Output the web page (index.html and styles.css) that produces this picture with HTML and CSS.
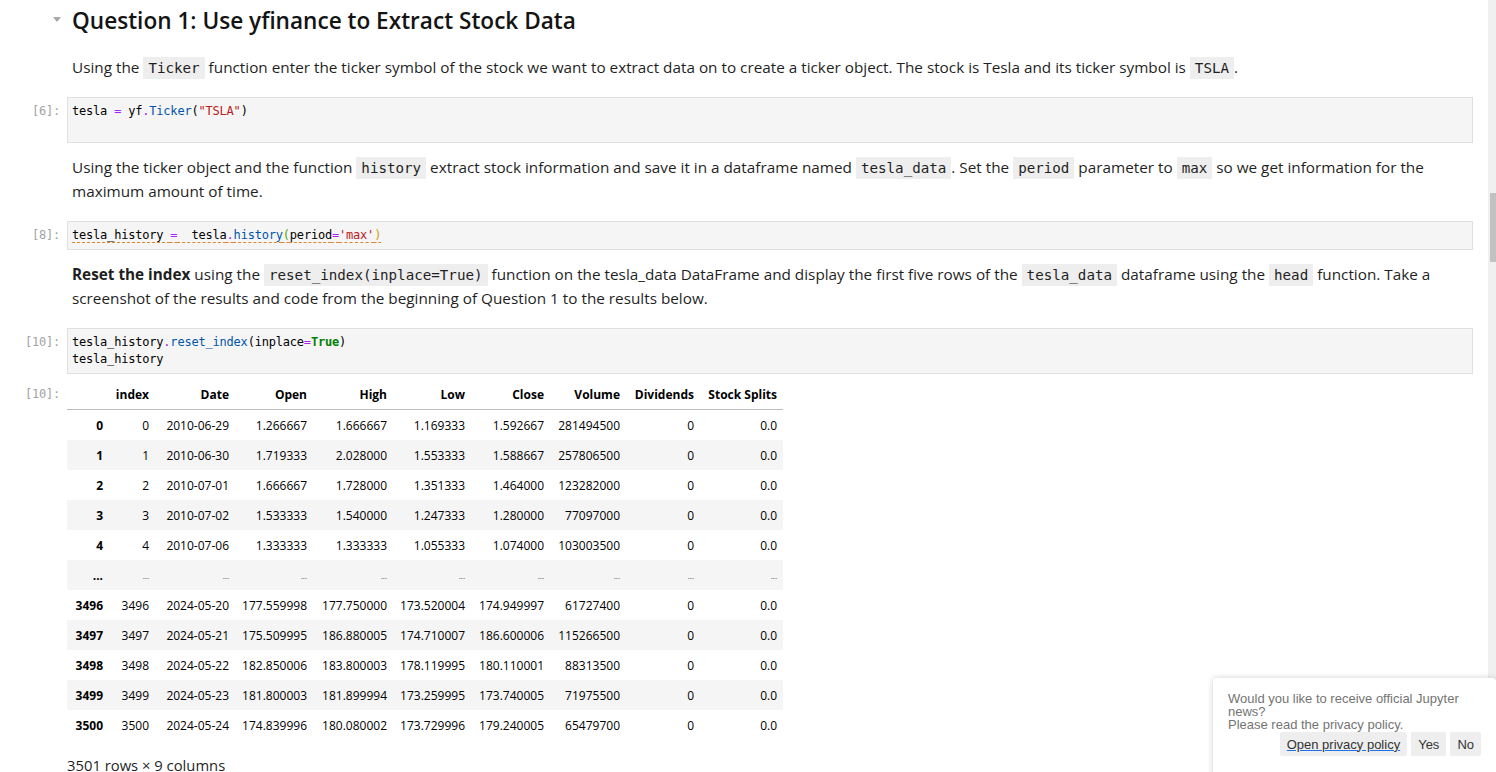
FILE: index.html
```html
<!DOCTYPE html>
<html lang="en">
<head>
<meta charset="utf-8">
<title>Notebook</title>
<link rel="stylesheet" href="styles.css">
</head>
<body>
<div class="app">
  <main class="notebook">
    <div class="cell md heading-cell">
      <div class="prompt"><span class="collapser"></span></div>
      <div class="md-body"><h2>Question 1: Use yfinance to Extract Stock Data</h2></div>
    </div>

    <div class="cell md">
      <div class="prompt"></div>
      <div class="md-body"><p>Using the <code>Ticker</code> function enter the ticker symbol of the stock we want to extract data on to create a ticker object. The stock is Tesla and its ticker symbol is <code>TSLA</code>.</p></div>
    </div>

    <div class="cell code">
      <div class="prompt">[6]:</div>
      <div class="editor"><pre>tesla <span class="op">=</span> yf<span class="op">.</span><span class="prop">Ticker</span>(<span class="str">"TSLA"</span>)
 </pre></div>
    </div>

    <div class="cell md">
      <div class="prompt"></div>
      <div class="md-body"><p>Using the ticker object and the function <code>history</code> extract stock information and save it in a dataframe named <code>tesla_data</code>. Set the <code>period</code> parameter to <code>max</code> so we get information for the maximum amount of time.</p></div>
    </div>

    <div class="cell code">
      <div class="prompt">[8]:</div>
      <div class="editor"><pre><span class="lint">tesla_history <span class="op">=</span>  tesla<span class="op">.</span><span class="prop">history</span><span class="br1">(</span>period<span class="op">=</span><span class="str">'max'</span><span class="br2">)</span></span></pre></div>
    </div>

    <div class="cell md">
      <div class="prompt"></div>
      <div class="md-body"><p><strong>Reset the index</strong> using the <code>reset_index(inplace=True)</code> function on the tesla_data DataFrame and display the first five rows of the <code>tesla_data</code> dataframe using the <code>head</code> function. Take a screenshot of the results and code from the beginning of Question 1 to the results below.</p></div>
    </div>

    <div class="cell code">
      <div class="prompt">[10]:</div>
      <div class="editor"><pre>tesla_history<span class="op">.</span><span class="prop">reset_index</span>(inplace<span class="op">=</span><span class="kw">True</span>)
tesla_history</pre></div>
    </div>

    <div class="cell output">
      <div class="prompt">[10]:</div>
      <div class="out-body">
        <table class="df">
          <thead>
            <tr><th></th><th>index</th><th>Date</th><th>Open</th><th>High</th><th>Low</th><th>Close</th><th>Volume</th><th>Dividends</th><th>Stock Splits</th></tr>
          </thead>
          <tbody>
            <tr><th>0</th><td>0</td><td>2010-06-29</td><td>1.266667</td><td>1.666667</td><td>1.169333</td><td>1.592667</td><td>281494500</td><td>0</td><td>0.0</td></tr>
            <tr><th>1</th><td>1</td><td>2010-06-30</td><td>1.719333</td><td>2.028000</td><td>1.553333</td><td>1.588667</td><td>257806500</td><td>0</td><td>0.0</td></tr>
            <tr><th>2</th><td>2</td><td>2010-07-01</td><td>1.666667</td><td>1.728000</td><td>1.351333</td><td>1.464000</td><td>123282000</td><td>0</td><td>0.0</td></tr>
            <tr><th>3</th><td>3</td><td>2010-07-02</td><td>1.533333</td><td>1.540000</td><td>1.247333</td><td>1.280000</td><td>77097000</td><td>0</td><td>0.0</td></tr>
            <tr><th>4</th><td>4</td><td>2010-07-06</td><td>1.333333</td><td>1.333333</td><td>1.055333</td><td>1.074000</td><td>103003500</td><td>0</td><td>0.0</td></tr>
            <tr class="dots"><th>...</th><td>...</td><td>...</td><td>...</td><td>...</td><td>...</td><td>...</td><td>...</td><td>...</td><td>...</td></tr>
            <tr><th>3496</th><td>3496</td><td>2024-05-20</td><td>177.559998</td><td>177.750000</td><td>173.520004</td><td>174.949997</td><td>61727400</td><td>0</td><td>0.0</td></tr>
            <tr><th>3497</th><td>3497</td><td>2024-05-21</td><td>175.509995</td><td>186.880005</td><td>174.710007</td><td>186.600006</td><td>115266500</td><td>0</td><td>0.0</td></tr>
            <tr><th>3498</th><td>3498</td><td>2024-05-22</td><td>182.850006</td><td>183.800003</td><td>178.119995</td><td>180.110001</td><td>88313500</td><td>0</td><td>0.0</td></tr>
            <tr><th>3499</th><td>3499</td><td>2024-05-23</td><td>181.800003</td><td>181.899994</td><td>173.259995</td><td>173.740005</td><td>71975500</td><td>0</td><td>0.0</td></tr>
            <tr><th>3500</th><td>3500</td><td>2024-05-24</td><td>174.839996</td><td>180.080002</td><td>173.729996</td><td>179.240005</td><td>65479700</td><td>0</td><td>0.0</td></tr>
          </tbody>
        </table>
        <p class="df-shape">3501 rows × 9 columns</p>
      </div>
    </div>
  </main>

  <div class="scrollbar"><div class="thumb"></div></div>

  <div class="toast">
    <p class="toast-msg">Would you like to receive official Jupyter news?<br>Please read the privacy policy.</p>
    <div class="toast-actions">
      <button class="btn link">Open privacy policy</button>
      <button class="btn">Yes</button>
      <button class="btn">No</button>
    </div>
  </div>
</div>
</body>
</html>
```

FILE: styles.css
```css
html, body {
  margin: 0;
  padding: 0;
  background: #ffffff;
}

body {
  font-family: "Open Sans", "Noto Sans", sans-serif;
  color: #1f1f1f;
  overflow: hidden;
  height: 772px;
}

.app {
  display: flex;
  height: 772px;
  position: relative;
}

.notebook {
  flex: 1;
  padding: 0 15px 0 3px;
  min-width: 0;
}

.scrollbar {
  width: 8px;
  background: #f0f0f0;
  position: relative;
}

.thumb {
  position: absolute;
  left: 2px;
  right: 0;
  top: 193px;
  height: 69px;
  background: #c1c1c1;
}

.cell {
  display: flex;
  align-items: flex-start;
}

.prompt {
  width: 64px;
  flex: none;
  box-sizing: border-box;
  padding-right: 7px;
  text-align: right;
  font-family: "DejaVu Sans Mono", monospace;
  font-size: 12px;
  letter-spacing: -0.2px;
  color: #a3a3a3;
}

.md-body {
  flex: 1;
  padding-left: 5px;
  min-width: 0;
}

.heading-cell .prompt {
  height: 42px;
  position: relative;
}

.collapser {
  position: absolute;
  right: 6px;
  top: 17px;
  width: 0;
  height: 0;
  border-left: 4px solid transparent;
  border-right: 4px solid transparent;
  border-top: 5px solid #a8a8a8;
}

h2 {
  margin: 0;
  padding-top: 5px;
  font-size: 22.6px;
  line-height: 32px;
  font-weight: 600;
  color: #141414;
}

p {
  margin: 0;
  font-size: 15.3px;
  line-height: 24px;
}

.md {
  margin-bottom: 18px;
}

.heading-cell {
  margin-bottom: 13px;
}

.md p code {
  font-family: "DejaVu Sans Mono", monospace;
  font-size: 14.2px;
  line-height: 1;
  background: #eeeeee;
  padding: 3px 5px;
  color: #1f1f1f;
}

strong {
  font-weight: 700;
}

.code {
  margin-bottom: 12px;
}

.code .prompt {
  padding-top: 6px;
  line-height: 17px;
}

.editor {
  flex: 1;
  min-width: 0;
  background: #f5f5f5;
  border: 1px solid #e0e0e0;
}

.editor pre {
  margin: 0;
  padding: 5px 4px 5px 4px;
  font-family: "DejaVu Sans Mono", monospace;
  font-size: 12px;
  letter-spacing: -0.2px;
  line-height: 17px;
  color: #000000;
  min-height: 17px;
}

.op { color: #aa22ff; }
.prop { color: #0055aa; }
.str { color: #ba2121; }
.kw { color: #008000; font-weight: 700; }
.br1 { color: #5aa800; }
.br2 { color: #c9a400; }

.lint {
  text-decoration: underline dashed #e0862e;
  text-underline-offset: 3px;
}

.output {
  margin-top: -6px;
}

.output .prompt {
  line-height: 29px;
}

.out-body {
  flex: 1;
  min-width: 0;
}

.df {
  border-collapse: collapse;
  table-layout: fixed;
  width: 716px;
  font-size: 12px;
  color: #000000;
}

.df th,
.df td {
  text-align: right;
  padding: 0 6px;
  height: 30px;
  white-space: nowrap;
  overflow: hidden;
}

.df thead th {
  height: 29px;
  font-weight: 700;
  border-bottom: 1px solid #bdbdbd;
}

.df tbody th {
  font-weight: 700;
}

.df tbody tr:nth-child(even) {
  background: #f5f5f5;
}

.df th:nth-child(1) { width: 30px; }
.df th:nth-child(2), .df td:nth-child(2) { width: 34px; }
.df thead th:nth-child(3) { width: 68px; }
.df thead th:nth-child(4) { width: 66px; }
.df thead th:nth-child(5) { width: 68px; }
.df thead th:nth-child(6) { width: 66px; }
.df thead th:nth-child(7) { width: 67px; }
.df thead th:nth-child(8) { width: 64px; }
.df thead th:nth-child(9) { width: 62px; }
.df thead th:nth-child(10) { width: 71px; }

.dots td {
  font-size: 8px;
  color: #333333;
}

.df-shape {
  margin-top: 13px;
  font-size: 14.8px;
}

.toast {
  position: absolute;
  left: 1213px;
  right: 0;
  top: 678px;
  height: 120px;
  box-sizing: border-box;
  padding: 14px 15px;
  background: #ffffff;
  border-radius: 4px;
  box-shadow: 0 0 6px rgba(0, 0, 0, 0.18);
  font-family: "Liberation Sans", Arial, sans-serif;
}

.toast-msg {
  font-size: 13px;
  line-height: 13px;
  color: #747474;
  margin: 0 0 1px 0;
}

.toast-actions {
  display: flex;
  justify-content: flex-end;
  gap: 4px;
}

.btn {
  font-family: "Liberation Sans", Arial, sans-serif;
  font-size: 13px;
  height: 24px;
  padding: 0 7px;
  border: none;
  border-radius: 2px;
  background: #eeeeee;
  color: #333333;
}

.btn.link {
  text-decoration: underline;
  text-decoration-color: #1a73e8;
}
```
